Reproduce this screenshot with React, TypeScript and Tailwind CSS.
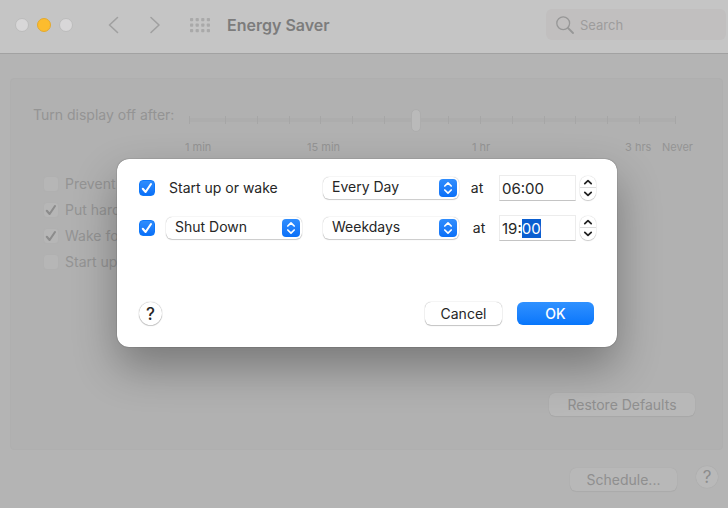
import { useEffect, useRef } from 'react';
import type { ReactNode } from 'react';

const MARKS = Array.from({ length: 15 }, (_, i) => i);
const DOTS = [0, 1, 2].flatMap((row) => [0, 1, 2, 3].map((col) => ({ row, col })));

const OPTIONS = [
  { label: 'Prevent', checked: false },
  { label: 'Put hard', checked: true },
  { label: 'Wake for', checked: true },
  { label: 'Start up', checked: false },
];

function CheckMark({ className }: { className: string }) {
  return (
    <svg
      viewBox="0 0 16 16"
      fill="none"
      stroke="currentColor"
      strokeLinecap="round"
      strokeLinejoin="round"
      className={`pointer-events-none col-start-1 row-start-1 size-4 ${className}`}
    >
      <path d="M3.8 8.8 6.6 12 12 4" strokeWidth={2.1} />
    </svg>
  );
}

function BlueCheckbox({ id, label }: { id: string; label?: string }) {
  return (
    <span className="grid size-4 shrink-0">
      <input
        id={id}
        type="checkbox"
        defaultChecked
        aria-label={label}
        className="peer col-start-1 row-start-1 size-4 appearance-none rounded border border-[#c8c8c8] bg-white checked:border-[#0f78fa] checked:bg-linear-to-b checked:from-[#2f8dfd] checked:to-[#0a70f8]"
      />
      <CheckMark className="hidden text-white peer-checked:block" />
    </span>
  );
}

function PopUpSelect({ label, options }: { label: string; options: string[] }) {
  return (
    <span className="grid w-[136px] shrink-0 items-center">
      <select
        aria-label={label}
        className="col-start-1 row-start-1 h-[22px] w-full appearance-none rounded-md bg-white pr-6 pb-0.5 pl-[9px] text-sm leading-5 shadow-[0_0_1px_rgba(0,0,0,0.35),0_1px_1px_rgba(0,0,0,0.18)] outline-none"
      >
        {options.map((option) => (
          <option key={option}>{option}</option>
        ))}
      </select>
      <span className="pointer-events-none col-start-1 row-start-1 mr-0.5 flex size-[18px] items-center justify-center justify-self-end rounded bg-linear-to-b from-[#2f8dfd] to-[#0a70f8]">
        <svg
          viewBox="0 0 18 18"
          fill="none"
          stroke="white"
          strokeWidth={1.7}
          strokeLinecap="round"
          strokeLinejoin="round"
          className="size-[18px]"
        >
          <path d="M5.8 7 9 3.9 12.2 7M5.8 11 9 14.1 12.2 11" />
        </svg>
      </span>
    </span>
  );
}

function StepButton({ label, path, className }: { label: string; path: string; className: string }) {
  return (
    <button type="button" aria-label={label} className={`flex h-3 w-4 items-center justify-center bg-white ${className}`}>
      <svg
        viewBox="0 0 16 12"
        fill="none"
        stroke="#222"
        strokeWidth={1.8}
        strokeLinecap="round"
        strokeLinejoin="round"
        className="h-3 w-4"
      >
        <path d={path} />
      </svg>
    </button>
  );
}

function TimeField({ label, value, selectMinutes = false }: { label: string; value: string; selectMinutes?: boolean }) {
  const ref = useRef<HTMLInputElement>(null);

  useEffect(() => {
    if (selectMinutes && ref.current) {
      ref.current.focus();
      ref.current.setSelectionRange(3, 5);
    }
  }, [selectMinutes]);

  return (
    <>
      <input
        ref={ref}
        type="text"
        aria-label={label}
        defaultValue={value}
        className="h-[26px] w-[77px] shrink-0 border border-[#ececec] border-b-[#c4c4c4] bg-white px-0.5 text-[15px] leading-5 outline-none selection:bg-[#0b5fd0] selection:text-white"
      />
      <span className="ml-1 flex shrink-0 flex-col rounded-lg shadow-[0_0_1px_rgba(0,0,0,0.4),0_1px_1px_rgba(0,0,0,0.18)]">
        <StepButton
          label={`Increase ${label}`}
          path="M4.8 7.6 8 4.6 11.2 7.6"
          className="rounded-t-lg border-b border-[#dedede]"
        />
        <StepButton label={`Decrease ${label}`} path="M4.8 4.4 8 7.4 11.2 4.4" className="rounded-b-lg" />
      </span>
    </>
  );
}

function MutedButton({ children, className }: { children: ReactNode; className: string }) {
  return (
    <button
      type="button"
      className={`h-[23px] rounded-md bg-[#b8b8b8] text-center text-sm leading-5 text-[#8f8f8f] shadow-[0_0_1px_rgba(0,0,0,0.1),0_1px_1px_rgba(0,0,0,0.04)] ${className}`}
    >
      {children}
    </button>
  );
}

function Toolbar() {
  return (
    <header className="flex h-[54px] items-center border-b border-[#a2a2a2] bg-[#c5c5c5] pr-0.5 pb-1 pl-[15px]">
      <div className="flex items-center gap-2">
        <button type="button" aria-label="Close" className="size-3.5 rounded-full border border-[#bcbcbc] bg-[#d8d7d8]" />
        <button type="button" aria-label="Minimize" className="size-3.5 rounded-full border border-[#e3a92f] bg-[#fcbc2e]" />
        <button type="button" aria-label="Zoom" className="size-3.5 rounded-full border border-[#bcbcbc] bg-[#d8d7d8]" />
      </div>
      <nav className="ml-8 flex gap-[22px]" aria-label="History">
        <button type="button" aria-label="Back">
          <svg viewBox="0 0 18 18" fill="none" stroke="#a0a0a0" strokeWidth={1.6} strokeLinecap="round" strokeLinejoin="round" className="size-[18px]">
            <path d="M12.5 1.5 4.5 9l8 7.5" />
          </svg>
        </button>
        <button type="button" aria-label="Forward">
          <svg viewBox="0 0 18 18" fill="none" stroke="#a0a0a0" strokeWidth={1.6} strokeLinecap="round" strokeLinejoin="round" className="size-[18px]">
            <path d="M6 1.5 14 9l-8 7.5" />
          </svg>
        </button>
      </nav>
      <button type="button" aria-label="Show All" className="ml-[27px]">
        <svg viewBox="0 0 20 16" fill="#a9a9a9" className="h-4 w-5">
          {DOTS.map(({ row, col }) => (
            <rect key={`${row}-${col}`} x={col * 5.6} y={1 + row * 5.5} width="3.2" height="3.2" rx="0.8" />
          ))}
        </svg>
      </button>
      <h1 className="ml-[17px] text-base leading-6 font-semibold text-[#7c7c7c]">Energy Saver</h1>
      <label className="ml-auto flex h-[31px] w-[180px] items-center gap-1.5 rounded-md bg-[#c1bfbf] pl-2.5">
        <svg viewBox="0 0 18 18" fill="none" stroke="#979797" strokeLinecap="round" className="size-[18px]">
          <circle cx="7.2" cy="7.2" r="6.4" strokeWidth={1.3} />
          <path d="m12 12 5 5" strokeWidth={1.8} />
        </svg>
        <input
          type="text"
          aria-label="Search"
          placeholder="Search"
          className="min-w-0 flex-1 bg-transparent text-[13px] leading-5 outline-none placeholder:text-[#9d9c9c]"
        />
      </label>
    </header>
  );
}

function EnergySettings() {
  return (
    <main className="mt-6 mr-[5px] ml-2.5 flex min-h-[372px] flex-col rounded border border-[#afafaf] bg-[#b1b1b1] pt-6 pr-6 pl-[22px] text-[#949494]">
      <div className="flex items-start">
        <label htmlFor="display-off" className="w-[150px] shrink-0 text-sm leading-6">
          Turn display off after:
        </label>
        <div className="min-w-0 flex-1">
          <div className="mr-[22px] ml-1.5 grid h-[34px] items-center">
            <div className="col-start-1 row-start-1 h-1 rounded-full bg-[#adadad]" />
            <div className="col-start-1 row-start-1 grid h-2 grid-cols-[36fr_repeat(13,32fr)_36fr] border-r border-[#a6a6a6]">
              {MARKS.map((mark) => (
                <span key={mark} className="border-l border-[#a6a6a6]" />
              ))}
            </div>
            <input
              id="display-off"
              type="range"
              min={0}
              max={1000}
              defaultValue={465}
              className="col-start-1 row-start-1 h-6 appearance-none bg-transparent [&::-webkit-slider-thumb]:h-[23px] [&::-webkit-slider-thumb]:w-2.5 [&::-webkit-slider-thumb]:appearance-none [&::-webkit-slider-thumb]:rounded-full [&::-webkit-slider-thumb]:border [&::-webkit-slider-thumb]:border-[#adadad] [&::-webkit-slider-thumb]:bg-[#bababa]"
            />
          </div>
          <div className="mt-0.5 mr-1 ml-0.5 grid grid-cols-[122fr_165fr_153fr_37fr_32fr] text-[11px] leading-4 whitespace-nowrap">
            <span>1 min</span>
            <span>15 min</span>
            <span>1 hr</span>
            <span>3 hrs</span>
            <span>Never</span>
          </div>
        </div>
      </div>

      <ul className="mt-4 ml-2.5">
        {OPTIONS.map(({ label, checked }) => (
          <li key={label}>
            <label className="flex h-[26px] items-center gap-1.5 text-sm leading-5">
              <span className="grid size-4">
                <input
                  type="checkbox"
                  defaultChecked={checked}
                  className="peer col-start-1 row-start-1 size-4 appearance-none rounded border border-[#b0b0b0] bg-[#b6b6b6]"
                />
                <CheckMark className="hidden text-[#8c8c8c] peer-checked:block" />
              </span>
              {label}
            </label>
          </li>
        ))}
      </ul>

      <div className="mt-auto mb-[33px] flex justify-end">
        <MutedButton className="mr-[3px] w-[146px]">Restore Defaults</MutedButton>
      </div>
    </main>
  );
}

function ScheduleDialog() {
  return (
    <div className="absolute inset-0 flex items-start justify-center pt-[159px] pl-1.5">
      <form
        role="dialog"
        aria-label="Schedule"
        className="w-full max-w-[500px] rounded-xl bg-white px-[22px] pt-4 pb-[22px] text-[#262626] shadow-[0_0_1px_rgba(0,0,0,0.7),0_20px_44px_rgba(0,0,0,0.32)]"
      >
        <div className="flex h-[26px] items-center">
          <BlueCheckbox id="wake" />
          <label htmlFor="wake" className="ml-3.5 w-[133px] shrink-0 text-sm leading-5">
            Start up or wake
          </label>
          <span className="ml-[21px]">
            <PopUpSelect label="Wake days" options={['Every Day', 'Weekdays', 'Weekends']} />
          </span>
          <span className="w-10 shrink-0 pr-1 text-center text-sm leading-5">at</span>
          <TimeField label="wake time" value="06:00" />
        </div>
        <div className="mt-3.5 flex h-[26px] items-center">
          <BlueCheckbox id="shutdown" label="Scheduled action" />
          <span className="ml-[11px]">
            <PopUpSelect label="Action" options={['Shut Down', 'Sleep', 'Restart']} />
          </span>
          <span className="ml-[21px]">
            <PopUpSelect label="Shut down days" options={['Weekdays', 'Every Day', 'Weekends']} />
          </span>
          <span className="w-10 shrink-0 text-center text-sm leading-5">at</span>
          <TimeField label="shut down time" value="19:00" selectMinutes />
        </div>

        <div className="mt-[61px] flex items-center text-sm leading-5">
          <button
            type="button"
            aria-label="Help"
            className="size-[23px] rounded-full bg-white text-[17px] leading-5 font-medium shadow-[0_0_1px_rgba(0,0,0,0.45),0_1px_1px_rgba(0,0,0,0.18)]"
          >
            ?
          </button>
          <button
            type="button"
            className="ml-auto h-[23px] w-[77px] rounded-md bg-white shadow-[0_0_1px_rgba(0,0,0,0.4),0_1px_1px_rgba(0,0,0,0.2)]"
          >
            Cancel
          </button>
          <button
            type="submit"
            className="mr-px ml-[15px] h-[23px] w-[77px] rounded-md bg-linear-to-b from-[#2f91ff] to-[#0676fb] font-medium text-white"
          >
            OK
          </button>
        </div>
      </form>
    </div>
  );
}

export default function App() {
  return (
    <div className="relative flex min-h-screen flex-col bg-[#b4b4b4] font-['Inter',sans-serif]">
      <Toolbar />
      <EnergySettings />
      <footer className="flex items-start justify-end gap-[19px] pt-4 pr-2.5 pb-4">
        <MutedButton className="mt-0.5 w-[107px]">Schedule...</MutedButton>
        <button
          type="button"
          aria-label="Help"
          className="size-[22px] rounded-full bg-[#b9b9b9] text-[17px] leading-5 text-[#8c8c8c] shadow-[0_0_1px_rgba(0,0,0,0.12)]"
        >
          ?
        </button>
      </footer>
      <ScheduleDialog />
    </div>
  );
}
